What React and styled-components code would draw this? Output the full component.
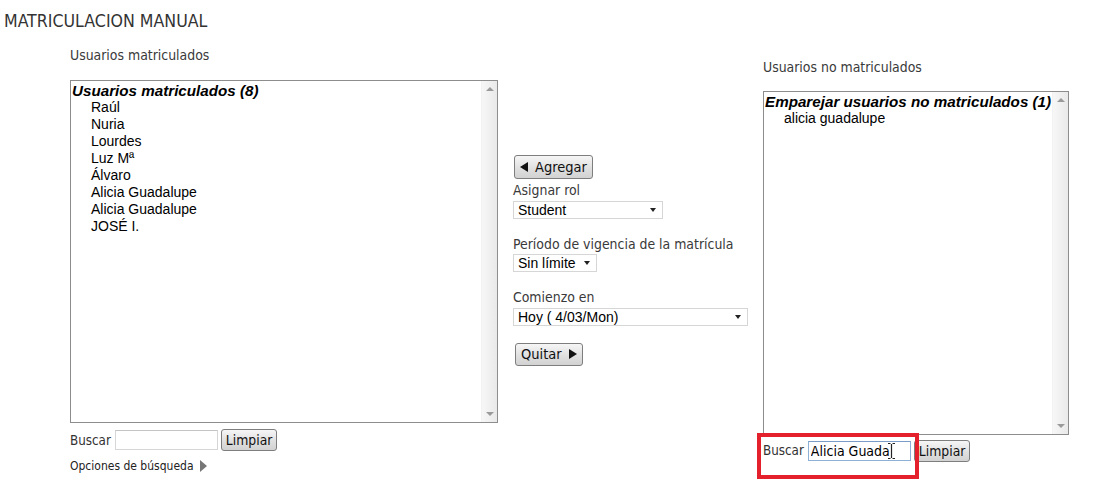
import React from 'react'
import styled, { createGlobalStyle } from 'styled-components'

const ui = `"DejaVu Sans Condensed", "DejaVu Sans", sans-serif`
const arial = `"Liberation Sans", Arial, sans-serif`

const GlobalStyle = createGlobalStyle`
  body {
    margin: 0;
    background: #fff;
    font-family: ${ui};
    color: #333;
  }
`

const Page = styled.div`
  min-height: 100vh;
  padding: 11px 0 0 4px;
  box-sizing: border-box;
`

const Title = styled.h2`
  margin: 0;
  font-size: 17.6px;
  line-height: 20px;
  font-weight: normal;
  color: #333;
`

const Columns = styled.div`
  display: grid;
  grid-template-columns: 428px 235px 306px;
  column-gap: 15px;
  align-items: center;
  margin: 16px 0 0 66px;
`

const Column = styled.div`
  display: flex;
  flex-direction: column;
  align-items: flex-start;
`

const Label = styled.div`
  font-size: 13.9px;
  line-height: 16px;
  color: #3a3a3a;
  white-space: nowrap;
  margin-top: ${p => p.$top || 0}px;
  margin-bottom: ${p => p.$bottom || 0}px;
`

const ListBox = styled.div`
  display: flex;
  box-sizing: border-box;
  width: 100%;
  height: ${p => p.$height}px;
  border: 1px solid #8d8d8d;
  background: #fff;
`

const ListContent = styled.div`
  flex: 1;
  min-width: 0;
  overflow: hidden;
  padding: 1px 0 0 1px;
  font-family: ${arial};
  color: #000;
`

const GroupTitle = styled.div`
  font-size: 15.2px;
  line-height: 17px;
  font-weight: bold;
  font-style: italic;
  white-space: nowrap;
`

const Option = styled.div`
  font-size: 14px;
  line-height: 17px;
  padding-left: 19px;
  white-space: nowrap;
`

const Scrollbar = styled.div`
  width: 16px;
  flex: none;
  display: flex;
  flex-direction: column;
  justify-content: space-between;
  align-items: center;
  background: linear-gradient(to right, #f7f7f7, #e9e9e9);
  border-left: 1px solid #f2f2f2;
  padding: 6px 0;
  box-sizing: border-box;
`

const Arrow = styled.span`
  width: 0;
  height: 0;
  border-left: 4px solid transparent;
  border-right: 4px solid transparent;
  ${p => p.$down
    ? 'border-top: 4px solid #9a9a9a;'
    : 'border-bottom: 4px solid #9a9a9a;'}
`

const SearchRow = styled.div`
  position: relative;
  display: flex;
  align-items: center;
  margin-top: ${p => p.$top}px;
  font-size: 13.3px;
  color: #333;
`

const SearchLabel = styled.span`
  margin-right: 4px;
`

const InputWrap = styled.span`
  position: relative;
  display: inline-flex;
`

const TextInput = styled.input`
  box-sizing: border-box;
  width: 103px;
  height: 20px;
  margin: 0 3px 0 0;
  padding: 0 2px;
  border: 1px solid ${p => (p.$focus ? '#8fb0d6' : '#d6d6d6')};
  border-top-color: ${p => (p.$focus ? '#7a9cc6' : '#c4c4c4')};
  font-family: ${ui};
  font-size: 14px;
  color: #000;
  outline: none;
`

const Caret = styled.svg`
  position: absolute;
  left: 79px;
  top: 1px;
  pointer-events: none;
`

const Button = styled.button`
  box-sizing: border-box;
  height: ${p => p.$h || 22}px;
  margin: 0 0 0 ${p => p.$left || 0}px;
  padding: 0 ${p => p.$pad || 4}px;
  border: 1px solid #7e7e7e;
  border-radius: 3px;
  background: linear-gradient(#f6f6f6, #dedede 60%, #d2d2d2);
  font-family: ${ui};
  font-size: ${p => p.$fs || 14.5}px;
  color: #111;
  display: inline-flex;
  align-items: center;
  gap: 7px;
  cursor: pointer;
`

const Tri = styled.span`
  width: 0;
  height: 0;
  border-top: 5px solid transparent;
  border-bottom: 5px solid transparent;
  ${p => p.$left
    ? 'border-right: 8px solid #111;'
    : 'border-left: 8px solid #111;'}
`

const Select = styled.div`
  box-sizing: border-box;
  width: ${p => p.$w}px;
  height: 18px;
  margin-top: ${p => p.$top}px;
  padding: 0 6px 0 4px;
  display: flex;
  align-items: center;
  justify-content: space-between;
  border: 1px solid #d6d6d6;
  background: #fff;
  font-family: ${arial};
  font-size: 14px;
  color: #000;
`

const SelectArrow = styled.span`
  width: 0;
  height: 0;
  border-left: 3.5px solid transparent;
  border-right: 3.5px solid transparent;
  border-top: 4px solid #222;
`

const Field = styled.div`
  display: flex;
  flex-direction: column;
  align-items: flex-start;
  margin-top: ${p => p.$top}px;
`

const Options = styled.div`
  display: flex;
  align-items: center;
  margin-top: 8px;
  font-size: 12px;
  line-height: 14px;
  color: #222;
`

const Expand = styled.span`
  margin-left: 6px;
  width: 0;
  height: 0;
  border-top: 6px solid transparent;
  border-bottom: 6px solid transparent;
  border-left: 7px solid #777;
`

const RedFrame = styled.div`
  position: absolute;
  left: -6px;
  top: -7px;
  width: 162px;
  height: 46px;
  box-sizing: border-box;
  border: 4px solid #e3202b;
  pointer-events: none;
`

const enrolled = [
  'Raúl',
  'Nuria',
  'Lourdes',
  'Luz Mª',
  'Álvaro',
  'Alicia Guadalupe',
  'Alicia Guadalupe',
  'JOSÉ I.',
]

const UserList = ({ title, users, height }) => (
  <ListBox $height={height}>
    <ListContent>
      <GroupTitle>{title}</GroupTitle>
      {users.map((u, i) => (
        <Option key={i}>{u}</Option>
      ))}
    </ListContent>
    <Scrollbar>
      <Arrow />
      <Arrow $down />
    </Scrollbar>
  </ListBox>
)

const App = () => {
  return (
    <Page>
      <GlobalStyle />
      <Title>MATRICULACION MANUAL</Title>
      <Columns>
        <Column>
          <Label $bottom={17}>Usuarios matriculados</Label>
          <UserList title="Usuarios matriculados (8)" users={enrolled} height={343} />
          <SearchRow $top={6}>
            <SearchLabel>Buscar</SearchLabel>
            <TextInput defaultValue="" />
            <Button $fs={13.8}>Limpiar</Button>
          </SearchRow>
          <Options>
            Opciones de búsqueda
            <Expand />
          </Options>
        </Column>

        <Column>
          <Button $h={24} $left={1} $pad={5}>
            <Tri $left /> Agregar
          </Button>
          <Field $top={3}>
            <Label>Asignar rol</Label>
            <Select $w={150} $top={3}>
              Student <SelectArrow />
            </Select>
          </Field>
          <Field $top={17}>
            <Label>Período de vigencia de la matrícula</Label>
            <Select $w={84} $top={2}>
              Sin límite <SelectArrow />
            </Select>
          </Field>
          <Field $top={17}>
            <Label>Comienzo en</Label>
            <Select $w={235} $top={3}>
              Hoy ( 4/03/Mon) <SelectArrow />
            </Select>
          </Field>
          <Field $top={17}>
            <Button $h={23} $left={2} $pad={5}>
              Quitar <Tri />
            </Button>
          </Field>
        </Column>

        <Column>
          <Label $bottom={16}>Usuarios no matriculados</Label>
          <UserList
            title="Emparejar usuarios no matriculados (1)"
            users={['alicia guadalupe']}
            height={344}
          />
          <SearchRow $top={5}>
            <SearchLabel>Buscar</SearchLabel>
            <InputWrap>
              <TextInput $focus defaultValue="Alicia Guada" />
              <Caret width="9" height="18" viewBox="0 0 9 18">
                <path d="M1 1.5h2.5M5.5 1.5H8M4.5 2v14M1 16.5h2.5M5.5 16.5H8" stroke="#222" strokeWidth="1.2" fill="none" />
              </Caret>
            </InputWrap>
            <Button $fs={13.8}>Limpiar</Button>
            <RedFrame />
          </SearchRow>
        </Column>
      </Columns>
    </Page>
  )
}

export default App
